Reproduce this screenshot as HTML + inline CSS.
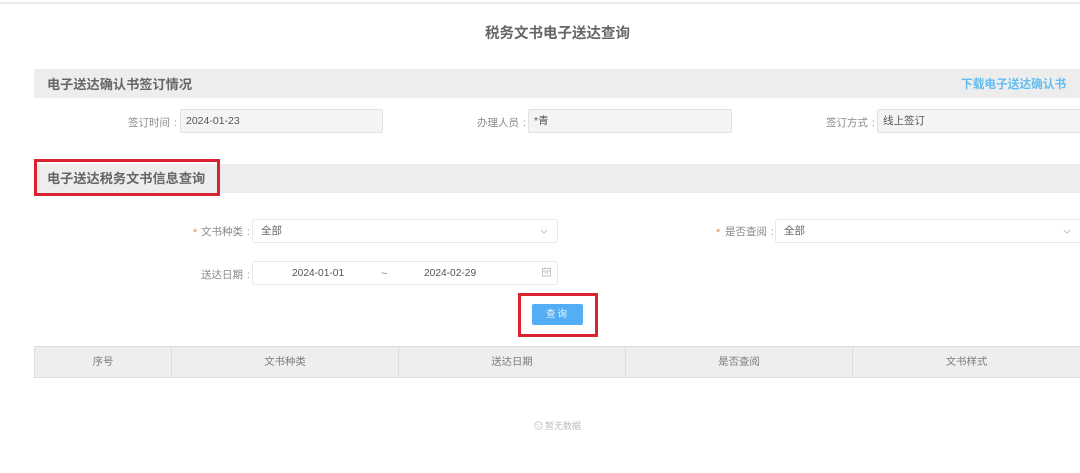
<!DOCTYPE html>
<html lang="zh-CN">
<head>
<meta charset="utf-8">
<title>税务文书电子送达查询</title>
<style>
html,body{margin:0;padding:0;width:1080px;height:473px;overflow:hidden;background:#fff}
body{position:relative;font-family:"Liberation Sans","Noto Sans CJK SC",sans-serif;color:#666;font-size:10.5px}
div,span{position:absolute;box-sizing:border-box;white-space:nowrap}
.sec{left:34px;width:1046px;background:#ededed}
.h{left:47px;font-size:13.2px;font-weight:700;color:#666;line-height:20px}
.lab{font-size:10.5px;line-height:16px;color:#8a8a8a;word-spacing:1px}
.ro{top:109px;height:24px;background:#f4f4f4;border:1px solid #e2e2e2;border-radius:2px;font-size:10.5px;line-height:23px;padding-left:5px;color:#555}
.sel{height:24px;background:#fff;border:1px solid #e8e8e8;border-radius:3px;font-size:10.5px;line-height:23px;padding-left:8px;color:#666}
.red{border:3px solid #da2330;background:transparent}
.th{top:347px;height:30px;line-height:31px;text-align:center;font-size:10.4px;color:#7d7d7d;border-right:1px solid #dcdcdc}
.star{color:#ef8a5a;font-size:11px;line-height:16px}
</style>
</head>
<body>
<div style="left:0;top:2px;width:1080px;height:2px;background:#e9e9e9"></div>
<div style="left:0;top:23px;width:1115px;text-align:center;font-size:14.5px;font-weight:700;line-height:22px;color:#666">税务文书电子送达查询</div>

<div class="sec" style="top:69px;height:29px"></div>
<div class="h" style="top:75px">电子送达确认书签订情况</div>
<div style="left:961px;top:76px;font-size:11.7px;font-weight:700;line-height:18px;color:#62bdf0">下载电子送达确认书</div>

<div class="lab" style="left:128px;top:115px">签订时间 :</div>
<div class="ro" style="left:180px;width:203px">2024-01-23</div>
<div class="lab" style="left:477px;top:115px">办理人员 :</div>
<div class="ro" style="left:528px;width:204px">*青</div>
<div class="lab" style="left:826px;top:115px">签订方式 :</div>
<div class="ro" style="left:877px;width:210px">线上签订</div>

<div class="sec" style="top:164px;height:29px"></div>
<div class="h" style="top:169px">电子送达税务文书信息查询</div>
<div class="red" style="left:34px;top:159px;width:186px;height:37px"></div>

<span class="star" style="left:193px;top:225px">*</span>
<div class="lab" style="left:201px;top:224px">文书种类 :</div>
<div class="sel" style="left:252px;top:219px;width:306px">全部</div>
<svg style="position:absolute;left:540px;top:229px" width="8" height="6" viewBox="0 0 8 6"><path d="M1 1.2 4 4.2 7 1.2" fill="none" stroke="#bdbdbd" stroke-width=".9"/></svg>

<span class="star" style="left:716px;top:225px">*</span>
<div class="lab" style="left:725px;top:224px">是否查阅 :</div>
<div class="sel" style="left:775px;top:219px;width:315px">全部</div>
<svg style="position:absolute;left:1063px;top:229px" width="8" height="6" viewBox="0 0 8 6"><path d="M1 1.2 4 4.2 7 1.2" fill="none" stroke="#bdbdbd" stroke-width=".9"/></svg>

<div class="lab" style="left:201px;top:267px">送达日期 :</div>
<div class="sel" style="left:252px;top:261px;width:306px;height:24px"></div>
<div style="left:292px;top:266px;font-size:10.2px;line-height:16px;color:#555">2024-01-01</div>
<div style="left:381px;top:265px;font-size:11px;line-height:18px;color:#888">~</div>
<div style="left:424px;top:266px;font-size:10.2px;line-height:16px;color:#555">2024-02-29</div>
<svg style="position:absolute;left:541px;top:267px" width="11" height="10" viewBox="0 0 11 10"><path d="M1.5 1.5H9.5V9H1.5ZM1.5 4H9.5M3.5 .5V2M7.5 .5V2M3.5 6H7.5" fill="none" stroke="#c0c0c0" stroke-width=".9"/></svg>

<div style="left:532px;top:304px;width:51px;height:21px;background:#54aef5;border-radius:2px;color:#eaf5fe;font-size:9.5px;line-height:22px;text-align:center;letter-spacing:2px">查询</div>
<div class="red" style="left:518px;top:293px;width:80px;height:44px"></div>

<div style="left:34px;top:346px;width:1046px;height:32px;background:#eeeeee;border:1px solid #dedede;border-right:0"></div>
<div class="th" style="left:35px;width:137px">序号</div>
<div class="th" style="left:172px;width:227px">文书种类</div>
<div class="th" style="left:399px;width:227px">送达日期</div>
<div class="th" style="left:626px;width:227px">是否查阅</div>
<div class="th" style="left:853px;width:227px;border-right:0">文书样式</div>

<svg style="position:absolute;left:534px;top:421px" width="9" height="9" viewBox="0 0 9 9"><circle cx="4.5" cy="4.5" r="3.8" fill="none" stroke="#c4c4c4" stroke-width=".8"/><path d="M2.6 3.2 3.8 4M6.4 3.2 5.2 4M2.8 6.3C3.6 5.3 5.4 5.3 6.2 6.3" fill="none" stroke="#c4c4c4" stroke-width=".7"/></svg>
<div style="left:545px;top:419px;font-size:9px;line-height:15px;color:#bbb">暂无数据</div>
</body>
</html>
